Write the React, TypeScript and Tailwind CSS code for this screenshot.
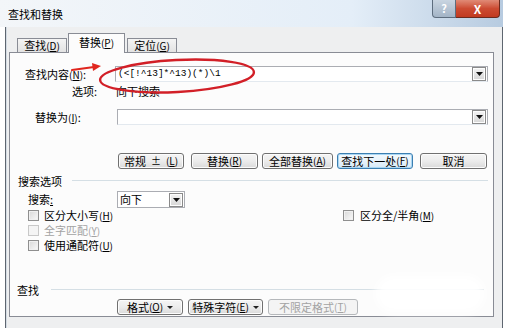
import React from "react";

const font = "font-['Noto_Sans_CJK_SC','Noto_Sans',sans-serif]";

const btnNormal =
  "border-[#707070] bg-linear-to-b from-[#f5f5f5] via-[#ececec] to-[#dadada] shadow-[inset_0_0_0_1px_#fcfcfc] text-black";
const btnFocus =
  "border-[#3c7fb1] bg-linear-to-b from-[#f3f9fd] via-[#e8f3fb] to-[#d6e9f7] shadow-[inset_0_0_0_1px_#a9d6f3] text-black";
const btnDisabled = "border-[#b5b8bb] bg-[#f4f4f4] text-[#a3a3a3]";

function Key({ k }: { k: string }) {
  return (
    <span className="text-[10px]">
      (<span className="underline">{k}</span>)
    </span>
  );
}

function Btn({
  w,
  variant = "normal",
  children,
}: {
  w: string;
  variant?: "normal" | "focus" | "disabled";
  children: React.ReactNode;
}) {
  const v =
    variant === "focus" ? btnFocus : variant === "disabled" ? btnDisabled : btnNormal;
  return (
    <div
      className={`flex h-[16px] shrink-0 items-center justify-center rounded-[3px] border text-[11px] leading-none ${w} ${v}`}
    >
      {children}
    </div>
  );
}

function DropArrow() {
  return (
    <div className="flex h-[14px] w-[14px] shrink-0 items-center justify-center border border-[#8a8a8a] bg-linear-to-b from-[#f4f4f4] to-[#d6d6d6] shadow-[inset_0_0_0_1px_#fdfdfd]">
      <svg width="7" height="4" viewBox="0 0 7 4">
        <polygon points="0,0 7,0 3.5,4" fill="#111" />
      </svg>
    </div>
  );
}

function SmallArrow() {
  return (
    <svg width="6" height="3" viewBox="0 0 6 3" className="ml-[4px]">
      <polygon points="0,0 6,0 3,3" fill="#222" />
    </svg>
  );
}

function Check({ disabled = false }: { disabled?: boolean }) {
  return (
    <div
      className={`h-[11px] w-[11px] shrink-0 border ${
        disabled
          ? "border-[#c8c8c8] bg-[#f4f4f4]"
          : "border-[#8f8f8f] bg-linear-to-br from-[#d8d8d8] to-[#fafafa] shadow-[inset_0_0_0_1px_#f0f0f0]"
      }`}
    />
  );
}

export default function App() {
  return (
    <div className={`h-[328px] w-[530px] overflow-hidden bg-white ${font}`}>
      <div className="flex h-[328px] w-[503px] flex-col">
        {/* title bar */}
        <div className="flex h-[27px] shrink-0 items-start justify-between bg-linear-to-r from-[#f3f6f9] via-[#e4eef8] via-70% to-[#b7cbe0]">
          <div className="pl-[8px] pt-[9px] text-[11px] leading-none text-black">查找和替换</div>
          <div className="mr-[3px] flex">
            <div className="flex h-[18px] w-[24px] items-center justify-center rounded-bl-[4px] border border-t-0 border-[#5d6d7e] bg-linear-to-b from-[#c9d5e1] to-[#a3b4c6] text-[11px] font-bold leading-none text-white">
              ?
            </div>
            <div className="flex h-[18px] w-[44px] items-center justify-center rounded-br-[4px] border border-l-0 border-t-0 border-[#6b2a1e] bg-linear-to-b from-[#e08a76] via-[#cc4b32] to-[#c13a20] text-[12px] font-bold leading-none text-white">
              X
            </div>
          </div>
        </div>

        {/* client area */}
        <div className="ml-[5px] flex flex-1 flex-col border-l border-r border-[#5e6670] bg-[#eeeff0] shadow-[inset_1px_0_0_#d3dbe3]">
          {/* tabs */}
          <div className="flex h-[25px] items-end pl-[11px]">
            <div className="flex h-[14px] w-[50px] items-center justify-center border border-b-0 border-[#898c95] bg-linear-to-b from-[#f4f4f4] to-[#e3e3e3] text-[11px] leading-none">
              查找<Key k="D" />
            </div>
            <div className="relative z-10 -mb-px ml-[1px] flex h-[20px] w-[57px] items-center justify-center border border-b-0 border-[#898c95] bg-[#fcfcfc] pb-[2px] text-[11px] leading-none">
              替换<Key k="P" />
            </div>
            <div className="ml-[2px] flex h-[14px] w-[50px] items-center justify-center border border-b-0 border-[#898c95] bg-linear-to-b from-[#f4f4f4] to-[#e3e3e3] text-[11px] leading-none">
              定位<Key k="G" />
            </div>
          </div>

          {/* panel */}
          <div className="relative ml-[3px] mr-[8px] flex h-[265px] flex-col border border-[#898c95] bg-[#fcfcfc] pr-[5px] text-[11px] leading-none text-black">
            {/* find what */}
            <div className="mt-[13px] flex h-[16px] items-center">
              <div className="w-[105px] shrink-0 pl-[15px]">
                查找内容<Key k="N" />:
              </div>
              <div className="flex h-[16px] flex-1 items-center justify-between border border-[#abadb3] border-b-[#e3e9ef] bg-white pl-[2px] pr-[1px]">
                <span className="font-['Liberation_Mono',monospace] text-[9.5px]">
                  {"(<[!^13]*^13)(*)\\1"}
                </span>
                <DropArrow />
              </div>
            </div>
            {/* options */}
            <div className="mt-[3px] flex h-[13px] items-center">
              <div className="w-[105px] shrink-0 pl-[62px]">选项:</div>
              <div className="pl-[1px]">向下搜索</div>
            </div>
            {/* replace with */}
            <div className="mt-[11px] flex h-[16px] items-center">
              <div className="w-[107px] shrink-0 pl-[25px]">
                替换为<Key k="I" />:
              </div>
              <div className="flex h-[16px] flex-1 items-center justify-end border border-[#abadb3] border-b-[#e3e9ef] bg-white pr-[1px]">
                <DropArrow />
              </div>
            </div>
            {/* buttons */}
            <div className="mt-[28px] flex pl-[108px]">
              <Btn w="w-[66px]">
                常规<span className="mx-[5px] text-[10px]">±</span>
                <Key k="L" />
              </Btn>
              <div className="ml-[7px]">
                <Btn w="w-[67px]">
                  替换<Key k="R" />
                </Btn>
              </div>
              <div className="ml-[4px]">
                <Btn w="w-[71px]">
                  全部替换<Key k="A" />
                </Btn>
              </div>
              <div className="ml-[4px]">
                <Btn w="w-[76px]" variant="focus">
                  查找下一处<Key k="F" />
                </Btn>
              </div>
              <div className="ml-[7px]">
                <Btn w="w-[67px]">取消</Btn>
              </div>
            </div>
            {/* search options header */}
            <div className="mt-[6px] flex h-[12px] items-center pl-[8px]">
              <span>搜索选项</span>
              <div className="ml-[10px] h-[2px] flex-1 border-t border-[#d5dfe5]" />
            </div>
            {/* search direction */}
            <div className="mt-[4px] flex h-[17px] items-center">
              <div className="w-[107px] shrink-0 pl-[18px]">
                搜索<span className="underline">:</span>
              </div>
              <div className="flex h-[17px] w-[68px] items-center justify-between border border-[#abadb3] bg-white pl-[2px] pr-[1px]">
                <span>向下</span>
                <DropArrow />
              </div>
            </div>
            {/* checkboxes */}
            <div className="flex flex-col pl-[18px]">
              <div className="flex h-[15px] items-center">
                <div className="flex w-[315px] items-center gap-[5px]">
                  <Check />
                  <span>
                    区分大小写<Key k="H" />
                  </span>
                </div>
                <div className="flex items-center gap-[6px]">
                  <Check />
                  <span>
                    区分全/半角<Key k="M" />
                  </span>
                </div>
              </div>
              <div className="flex h-[15px] items-center gap-[5px] text-[#a3a3a3]">
                <Check disabled />
                <span>
                  全字匹配<Key k="Y" />
                </span>
              </div>
              <div className="flex h-[15px] items-center gap-[5px]">
                <Check />
                <span>
                  使用通配符<Key k="U" />
                </span>
              </div>
            </div>
            {/* find section */}
            <div className="mt-[31px] flex h-[12px] items-center pl-[7px]">
              <span>查找</span>
              <div className="ml-[12px] mr-[4px] h-[2px] flex-1 border-t border-[#d5dfe5]" />
            </div>
            <div className="mt-[3px] flex pl-[107px]">
              <Btn w="w-[66px]">
                格式<Key k="O" />
                <SmallArrow />
              </Btn>
              <div className="ml-[5px]">
                <Btn w="w-[75px]">
                  特殊字符<Key k="E" />
                  <SmallArrow />
                </Btn>
              </div>
              <div className="ml-[5px]">
                <Btn w="w-[90px]" variant="disabled">
                  不限定格式<Key k="T" />
                </Btn>
              </div>
            </div>

            {/* faded watermark */}
            <div className="absolute left-[365px] top-[222px] h-[38px] w-[110px] rounded-full bg-white/90 blur-[4px]" />

            {/* red annotation: arrow */}
            <svg
              className="absolute left-[60px] top-[8px]"
              width="34"
              height="12"
              viewBox="0 0 34 12"
            >
              <path d="M2 9 L24 6" stroke="#e0261e" strokeWidth="2.2" fill="none" strokeLinecap="round" />
              <polygon points="22,2 31,5 23,10" fill="#e0261e" />
            </svg>
            {/* red annotation: ellipse */}
            <svg
              className="absolute left-[87px] top-[3px]"
              width="162"
              height="40"
              viewBox="0 0 162 40"
            >
              <ellipse
                cx="80"
                cy="20"
                rx="77"
                ry="16"
                transform="rotate(-3 80 20)"
                stroke="#d21f27"
                strokeWidth="2.4"
                fill="none"
              />
            </svg>
          </div>
        </div>
      </div>
    </div>
  );
}
